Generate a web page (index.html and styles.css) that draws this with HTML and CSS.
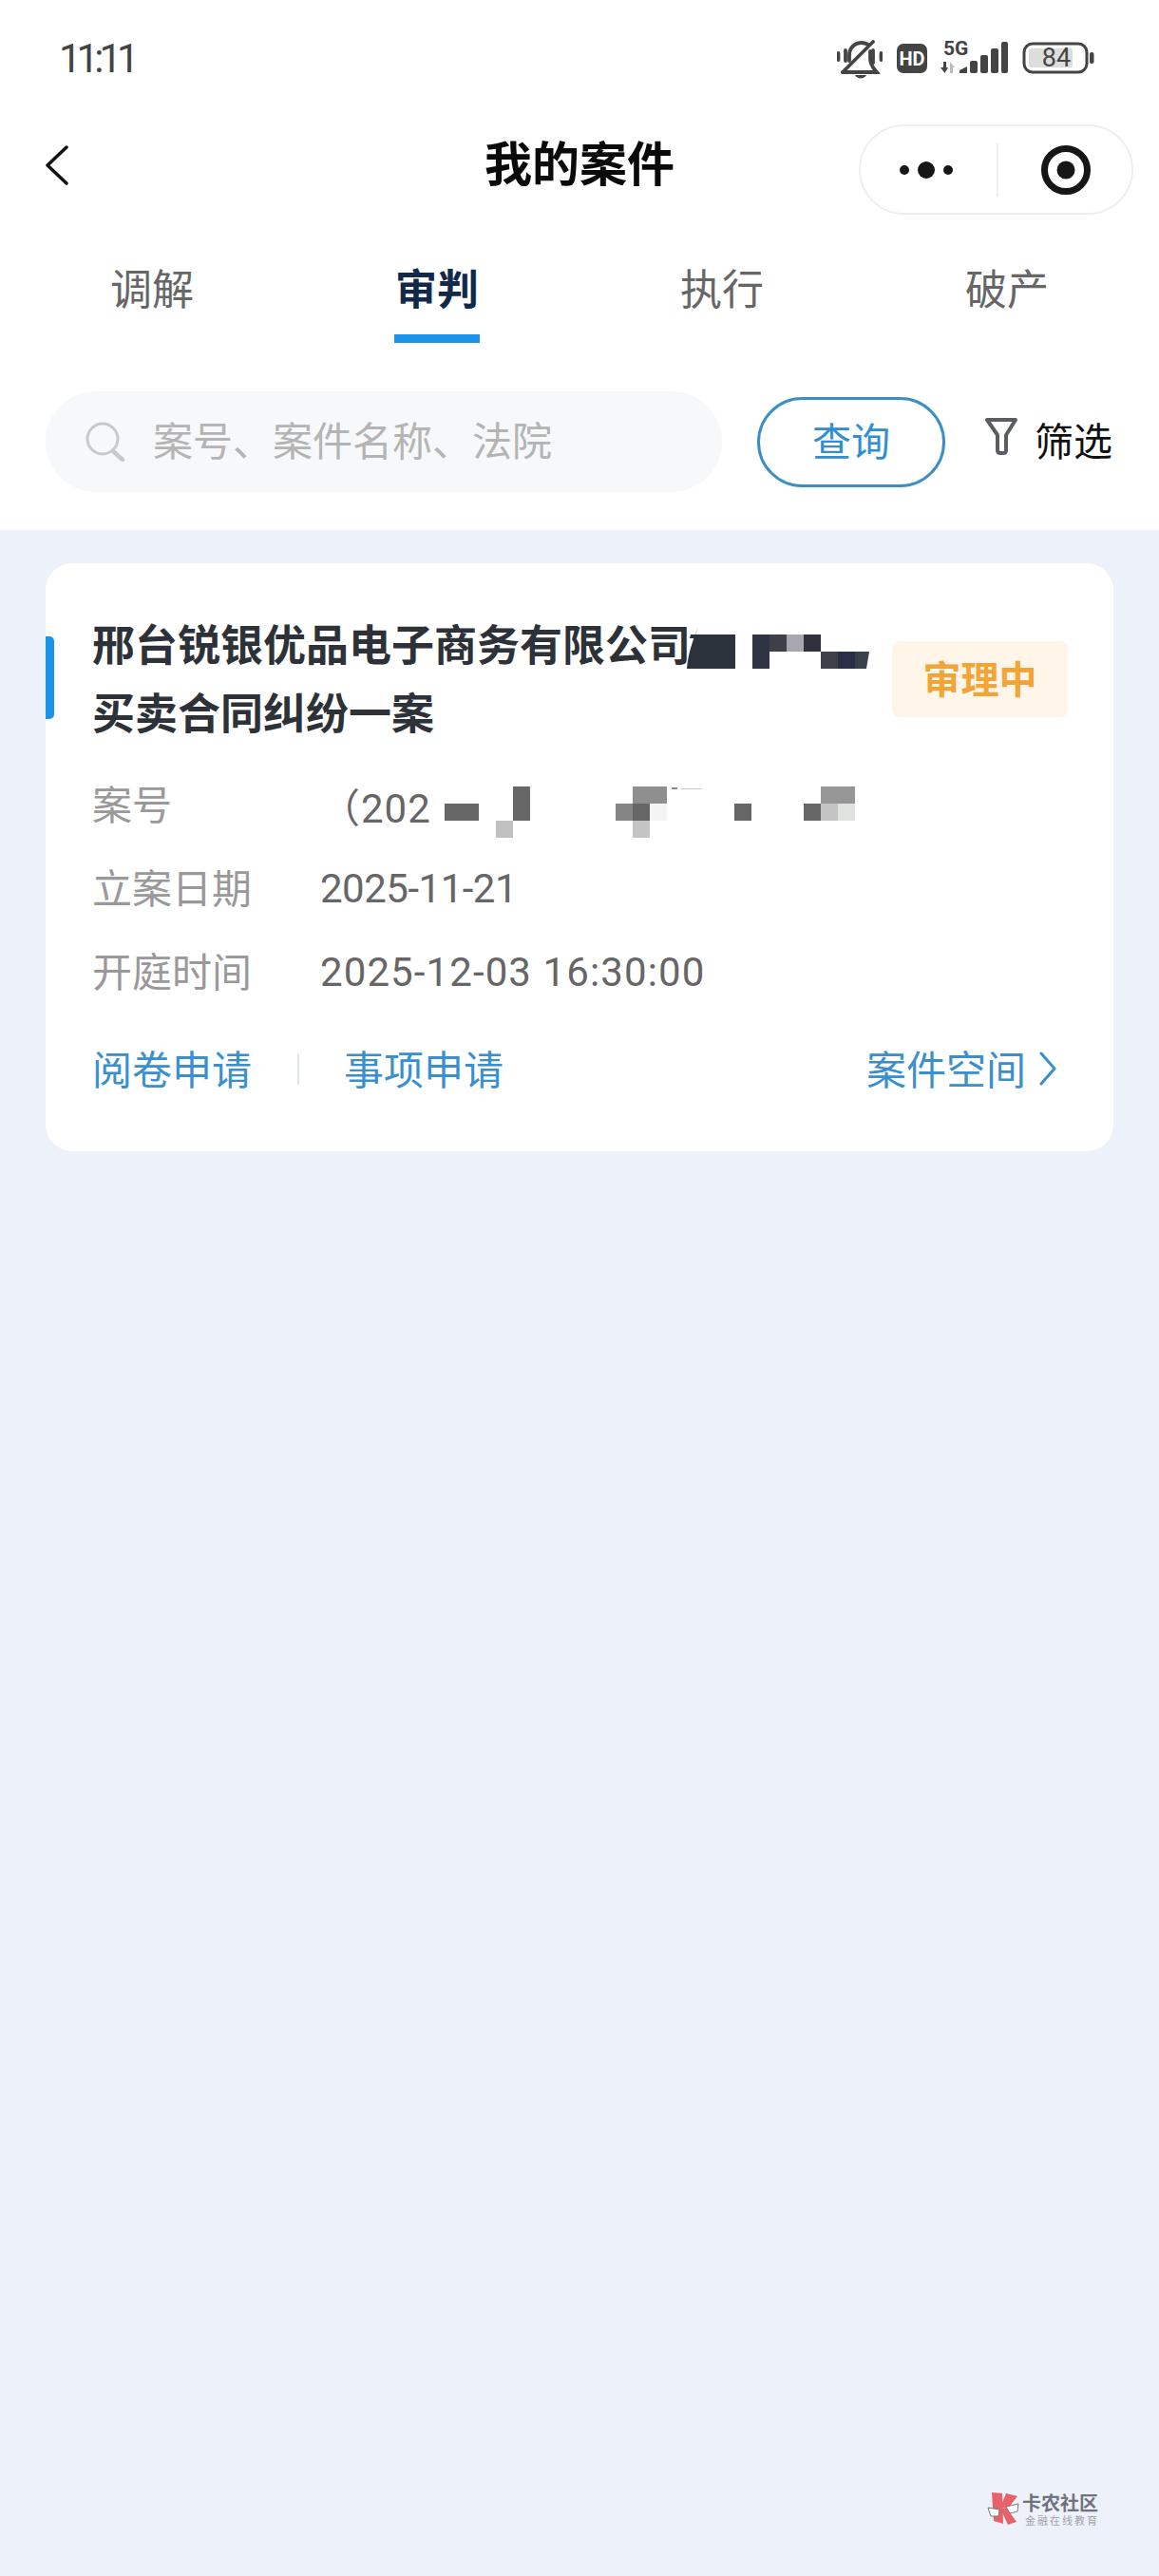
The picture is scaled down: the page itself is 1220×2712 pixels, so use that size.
FILE: index.html
```html
<!DOCTYPE html>
<html lang="zh-CN">
<head>
    <meta charset="UTF-8">
    <meta name="viewport" content="width=device-width, initial-scale=1.0">
    <title>我的案件</title>
    <link rel="stylesheet" href="styles.css">
</head>
<body>
    <div class="page">
        <div class="header">
            <!-- status bar -->
            <div class="status-bar">
                <span class="status-time">11:11</span>
                <div class="status-icons">
                    <svg class="icon-mute" width="48" height="42" viewBox="0 0 48 42" fill="none" stroke="#444" stroke-width="3.800" stroke-linecap="round">
                        <path d="M6 34L38 2"/>
                        <path d="M13 22V16C13 8 19 3 26 3C29 3 31 4 33 5"/>
                        <path d="M35 12V20C35 27 39 30 42 34H6"/>
                        <path d="M1.500 14V21M9 11V22M38 11V24M46.500 14V21"/>
                        <path d="M19 37H31C29 41.500 21 41.500 19 37Z" fill="#444" stroke="none"/>
                    </svg>
                    <svg class="icon-hd" width="32" height="31" viewBox="0 0 32 31">
                        <rect width="32" height="31" rx="7" fill="#444"/>
                        <text x="16" y="22.500" text-anchor="middle" class="svg-hd">HD</text>
                    </svg>
                    <svg class="icon-signal" width="74" height="42" viewBox="0 -6 74 42">
                        <text x="4" y="15" class="svg-5g">5G</text>
                        <path d="M4 22H7V28H9L5.500 34L1 28H4Z" fill="#444"/>
                        <path d="M11 34V22L16 28H14V34Z" fill="#bbb"/>
                        <path d="M21 34V31L29 27V34Z" fill="#444"/>
                        <rect x="32" y="21" width="8" height="13" rx="2" fill="#444"/>
                        <rect x="43" y="15" width="8" height="19" rx="2" fill="#444"/>
                        <rect x="54" y="8" width="8" height="26" rx="2" fill="#444"/>
                        <rect x="65" y="1" width="7" height="33" rx="2" fill="#444"/>
                    </svg>
                    <svg class="icon-battery" width="76" height="34" viewBox="0 0 76 34">
                        <rect x="2" y="2" width="66" height="30" rx="9" fill="none" stroke="#444" stroke-width="3"/>
                        <rect x="7" y="7" width="46" height="20" rx="2" fill="#ddd"/>
                        <text x="36" y="26" text-anchor="middle" class="svg-battery">84</text>
                        <rect x="71" y="11" width="4.500" height="12" rx="2" fill="#444"/>
                    </svg>
                </div>
            </div>

            <!-- nav bar -->
            <div class="nav-bar">
                <svg class="nav-back" width="24" height="42" viewBox="0 0 24 42" fill="none" stroke="#111" stroke-width="3.500" stroke-linecap="round" stroke-linejoin="round">
                    <path d="M22 2L2 21L22 40"/>
                </svg>
                <h1 class="nav-title">我的案件</h1>
                <div class="capsule">
                    <svg width="60" height="20" viewBox="0 0 60 20" fill="#161616">
                        <circle cx="7" cy="10" r="5"/>
                        <circle cx="30" cy="10" r="9"/>
                        <circle cx="53" cy="10" r="5"/>
                    </svg>
                    <span class="capsule-line"></span>
                    <svg width="54" height="54" viewBox="0 0 54 54">
                        <circle cx="27" cy="27" r="22.500" fill="none" stroke="#161616" stroke-width="7"/>
                        <circle cx="27" cy="27" r="9.500" fill="#161616"/>
                    </svg>
                </div>
            </div>

            <!-- tabs -->
            <div class="tabs">
                <div class="tab">调解</div>
                <div class="tab active">审判</div>
                <div class="tab">执行</div>
                <div class="tab">破产</div>
            </div>

            <!-- search row -->
            <div class="search-row">
                <div class="search-box">
                    <svg class="search-icon" width="42" height="42" viewBox="0 0 42 42" fill="none" stroke="#c9c9c9">
                        <circle cx="18" cy="18" r="16" stroke-width="3"/>
                        <path d="M29 31L39 40" stroke-width="4.500" stroke-linecap="round"/>
                    </svg>
                    <span class="search-text">案号、案件名称、法院</span>
                </div>
                <button class="search-btn">查询</button>
                <div class="filter">
                    <svg width="36" height="40" viewBox="0 0 36 40" fill="none" stroke="#5a5d62" stroke-width="4" stroke-linejoin="round">
                        <path d="M3 3H33L23 19V35Q23 38 20 38H17Q14 38 14 35V19Z"/>
                    </svg>
                    <span class="filter-text">筛选</span>
                </div>
            </div>
        </div>

        <div class="main">
            <div class="case-card">
                <span class="case-mark"></span>
                <div class="case-head">
                    <div class="case-title">
                        <div class="title-line">
                            <span>邢台锐银优品电子商务有限公司</span>
                            <svg class="title-mosaic" width="192" height="46" viewBox="0 0 192 46">
                                <path d="M12 0L9 8H4L3 12H8V44H0C1 30 6 14 12 0Z" fill="#2c323b"/>
                                <rect x="7" y="8" width="44" height="36" fill="#2c333d"/>
                                <rect x="69" y="8" width="18" height="36" fill="#2f3344"/>
                                <rect x="87" y="8" width="18" height="18" fill="#3f3f4a"/>
                                <rect x="105" y="8" width="18" height="18" fill="#a8a7b0"/>
                                <rect x="123" y="8" width="18" height="18" fill="#30303f"/>
                                <rect x="141" y="26" width="18" height="18" fill="#40404a"/>
                                <rect x="159" y="26" width="18" height="18" fill="#2b2f45"/>
                                <path d="M177 26H192L189 44H177Z" fill="#38404a"/>
                            </svg>
                        </div>
                        <div class="title-line">买卖合同纠纷一案</div>
                    </div>
                    <span class="case-status">审理中</span>
                </div>

                <div class="case-row">
                    <span class="case-label">案号</span>
                    <span class="case-value case-no">（202</span>
                    <svg class="no-mosaic" width="447" height="54" viewBox="0 0 447 54">
                        <rect x="15" y="18" width="36" height="18" fill="#666"/>
                        <rect x="87" y="0" width="18" height="36" fill="#666"/>
                        <rect x="69" y="36" width="18" height="18" fill="#c0c0c0"/>
                        <rect x="195" y="18" width="18" height="18" fill="#858585"/>
                        <rect x="213" y="0" width="36" height="18" fill="#8f8f8f"/>
                        <rect x="213" y="18" width="18" height="18" fill="#666"/>
                        <rect x="231" y="18" width="18" height="18" fill="#f4f4f4"/>
                        <rect x="213" y="36" width="18" height="18" fill="#c4c4c4"/>
                        <rect x="254" y="1" width="6" height="2" fill="#888"/>
                        <rect x="264" y="2" width="22" height="1" fill="#ccc"/>
                        <rect x="320" y="18" width="18" height="18" fill="#666"/>
                        <rect x="393" y="18" width="18" height="18" fill="#666"/>
                        <rect x="411" y="0" width="36" height="18" fill="#969696"/>
                        <rect x="411" y="18" width="18" height="18" fill="#c4c4c4"/>
                        <rect x="429" y="18" width="18" height="18" fill="#e0e2e0"/>
                    </svg>
                </div>
                <div class="case-row">
                    <span class="case-label">立案日期</span>
                    <span class="case-value value-date">2025-11-21</span>
                </div>
                <div class="case-row">
                    <span class="case-label">开庭时间</span>
                    <span class="case-value value-time">2025-12-03 16:30:00</span>
                </div>

                <div class="case-actions">
                    <span>阅卷申请</span>
                    <span class="action-line"></span>
                    <span>事项申请</span>
                    <span class="action-space">案件空间</span>
                    <svg class="action-arrow" width="18" height="36" viewBox="0 0 18 36" fill="none" stroke="#3a90cf" stroke-width="3" stroke-linecap="round" stroke-linejoin="round">
                        <path d="M2 2L16 18L2 34"/>
                    </svg>
                </div>
            </div>

            <div class="watermark">
                <svg width="34" height="35" viewBox="0 0 34 35">
                    <path d="M5 0L16 1L17 33L7 30Z" fill="#e8606a"/>
                    <path d="M20 1L32 4L22 17L14 16Z" fill="#e8606a"/>
                    <path d="M14 17H21L31 31L22 34Z" fill="#e8606a"/>
                    <path d="M1 16L13 18L12 25H4Z" fill="#fff" stroke="#77787f"/>
                    <path d="M20 15L33 12L32 20L24 22Z" fill="#fff" stroke="#77787f"/>
                </svg>
                <div class="watermark-text">
                    <span class="watermark-name">卡农社区</span>
                    <span class="watermark-sub">金融在线教育</span>
                </div>
            </div>
        </div>
    </div>
</body>
</html>
```

FILE: styles.css
```css
* {
    box-sizing: border-box;
}

body {
    margin: 0;
    font-family: "Noto Sans CJK SC", Roboto, sans-serif;
}

.page {
    width: 1220px;
    height: 2712px;
    display: flex;
    flex-direction: column;
    background-color: #edf1f9;
}

.header {
    background-color: #fff;
    height: 558px;
}

.status-bar {
    height: 131px;
    padding: 42px 68px 0 62px;
    display: flex;
    justify-content: space-between;
    align-items: flex-start;
}

.status-time {
    font-family: Roboto, sans-serif;
    font-size: 42px;
    line-height: 40px;
    letter-spacing: -5px;
    color: #444;
}

.status-icons {
    display: flex;
    align-items: flex-start;
}

.icon-hd {
    margin: 4px 0 0 15px;
}

.icon-signal {
    margin: -5px 0 0 13px;
}

.icon-battery {
    margin: 2px 0 0 13px;
}

.svg-hd {
    font-family: Roboto, sans-serif;
    font-size: 20px;
    font-weight: 700;
    fill: #fff;
}

.svg-5g {
    font-family: Roboto, sans-serif;
    font-size: 21px;
    font-weight: 700;
    fill: #444;
}

.svg-battery {
    font-family: Roboto, sans-serif;
    font-size: 27px;
    fill: #444;
}

.nav-bar {
    height: 95px;
    display: flex;
    align-items: center;
    position: relative;
    padding: 0 27px 0 48px;
}

.nav-back {
    margin-top: -10px;
}

.nav-title {
    position: absolute;
    left: 0;
    right: 0;
    top: 8px;
    margin: 0;
    font-size: 50px;
    line-height: 60px;
    font-weight: 700;
    text-align: center;
    color: #0a0a0a;
}

.capsule {
    margin-left: auto;
    width: 289px;
    height: 95px;
    border: 2px solid #eee;
    border-radius: 48px;
    background-color: #fff;
    display: flex;
    align-items: center;
    padding-left: 39px;
    position: relative;
}

.capsule-line {
    width: 2px;
    height: 56px;
    background-color: #eee;
    margin: 0 44px 0 44px;
}

.tabs {
    display: flex;
    padding: 0 10px;
}

.tab {
    flex: 1;
    height: 135px;
    padding-top: 48px;
    font-size: 44px;
    line-height: 56px;
    text-align: center;
    color: #666;
    position: relative;
}

.tab.active {
    font-weight: 700;
    color: #13294b;
}

.tab.active::after {
    content: "";
    position: absolute;
    bottom: 0;
    left: 105px;
    width: 90px;
    height: 9px;
    background-color: #1a94e8;
}

.search-row {
    margin-top: 51px;
    padding: 0 48px;
    display: flex;
    align-items: center;
}

.search-box {
    flex: none;
    width: 712px;
    height: 106px;
    border-radius: 53px;
    background-color: #f7f8f9;
    display: flex;
    align-items: center;
    padding-left: 42px;
}

.search-icon {
    flex: none;
}

.search-text {
    margin: 0 0 6px 29px;
    font-size: 42px;
    line-height: 60px;
    color: #b4b4b4;
}

.search-btn {
    flex: none;
    margin-left: 37px;
    width: 198px;
    height: 95px;
    padding: 0 0 6px;
    border: 3px solid #3a8fc7;
    border-radius: 48px;
    background-color: #fff;
    font-family: inherit;
    font-size: 41px;
    color: #2f8fd0;
}

.filter {
    flex: none;
    margin-left: 41px;
    display: flex;
    align-items: center;
    gap: 17px;
    font-size: 41px;
    color: #111;
    white-space: nowrap;
}

.filter svg {
    margin-top: -12px;
}

.filter-text {
    margin-bottom: 6px;
}

.main {
    flex: 1;
    display: flex;
    flex-direction: column;
}

.case-card {
    margin: 35px 48px 0;
    height: 619px;
    padding: 46px 60px 0 49px;
    background-color: #fff;
    border-radius: 28px;
    position: relative;
}

.case-mark {
    position: absolute;
    left: 0;
    top: 77px;
    width: 9px;
    height: 87px;
    background-color: #1a94e8;
    border-radius: 0 5px 5px 0;
}

.case-head {
    height: 147px;
    margin-right: -12px;
    margin-bottom: 17px;
    display: flex;
    align-items: center;
    justify-content: space-between;
}

.title-line {
    height: 72px;
    display: flex;
    align-items: center;
    font-size: 45px;
    line-height: 72px;
    font-weight: 700;
    color: #2d3138;
    white-space: nowrap;
}

.title-mosaic {
    margin: 12px 0 0 -4px;
}

.case-status {
    width: 185px;
    height: 80px;
    margin-top: 5px;
    border-radius: 8px;
    background-color: #fff6e9;
    font-size: 40px;
    line-height: 76px;
    font-weight: 700;
    text-align: center;
    color: #f2a436;
}

.case-row {
    height: 88px;
    display: flex;
    align-items: center;
    font-size: 42px;
}

.case-label {
    flex: none;
    width: 240px;
    margin-bottom: 6px;
    color: #999;
}

.case-value {
    font-family: Roboto, "Noto Sans CJK SC", sans-serif;
    color: #666;
}

.case-no {
    flex: none;
    width: 116px;
    letter-spacing: 1px;
    white-space: nowrap;
}

.value-date {
    letter-spacing: -0.5px;
}

.value-time {
    letter-spacing: 1.1px;
}

.no-mosaic {
    align-self: flex-start;
    margin-top: 25px;
}

.case-actions {
    margin-top: 26px;
    height: 60px;
    display: flex;
    align-items: center;
    font-size: 42px;
    color: #3a90cf;
}

.action-line {
    width: 2px;
    height: 33px;
    margin: 4px 47px 0 48px;
    background-color: #dde6ee;
}

.action-space {
    margin-left: auto;
}

.action-arrow {
    margin: 4px 0 0 14px;
}

.watermark {
    margin: auto 63px 53px 0;
    align-self: flex-end;
    display: flex;
    gap: 3px;
}

.watermark-text {
    display: flex;
    flex-direction: column;
}

.watermark-name {
    font-size: 20px;
    line-height: 22px;
    font-weight: 700;
    color: #70727e;
}

.watermark-sub {
    margin-top: 1px;
    font-size: 11px;
    line-height: 12px;
    letter-spacing: 2px;
    padding-left: 3px;
    color: #a0a2aa;
}
```
